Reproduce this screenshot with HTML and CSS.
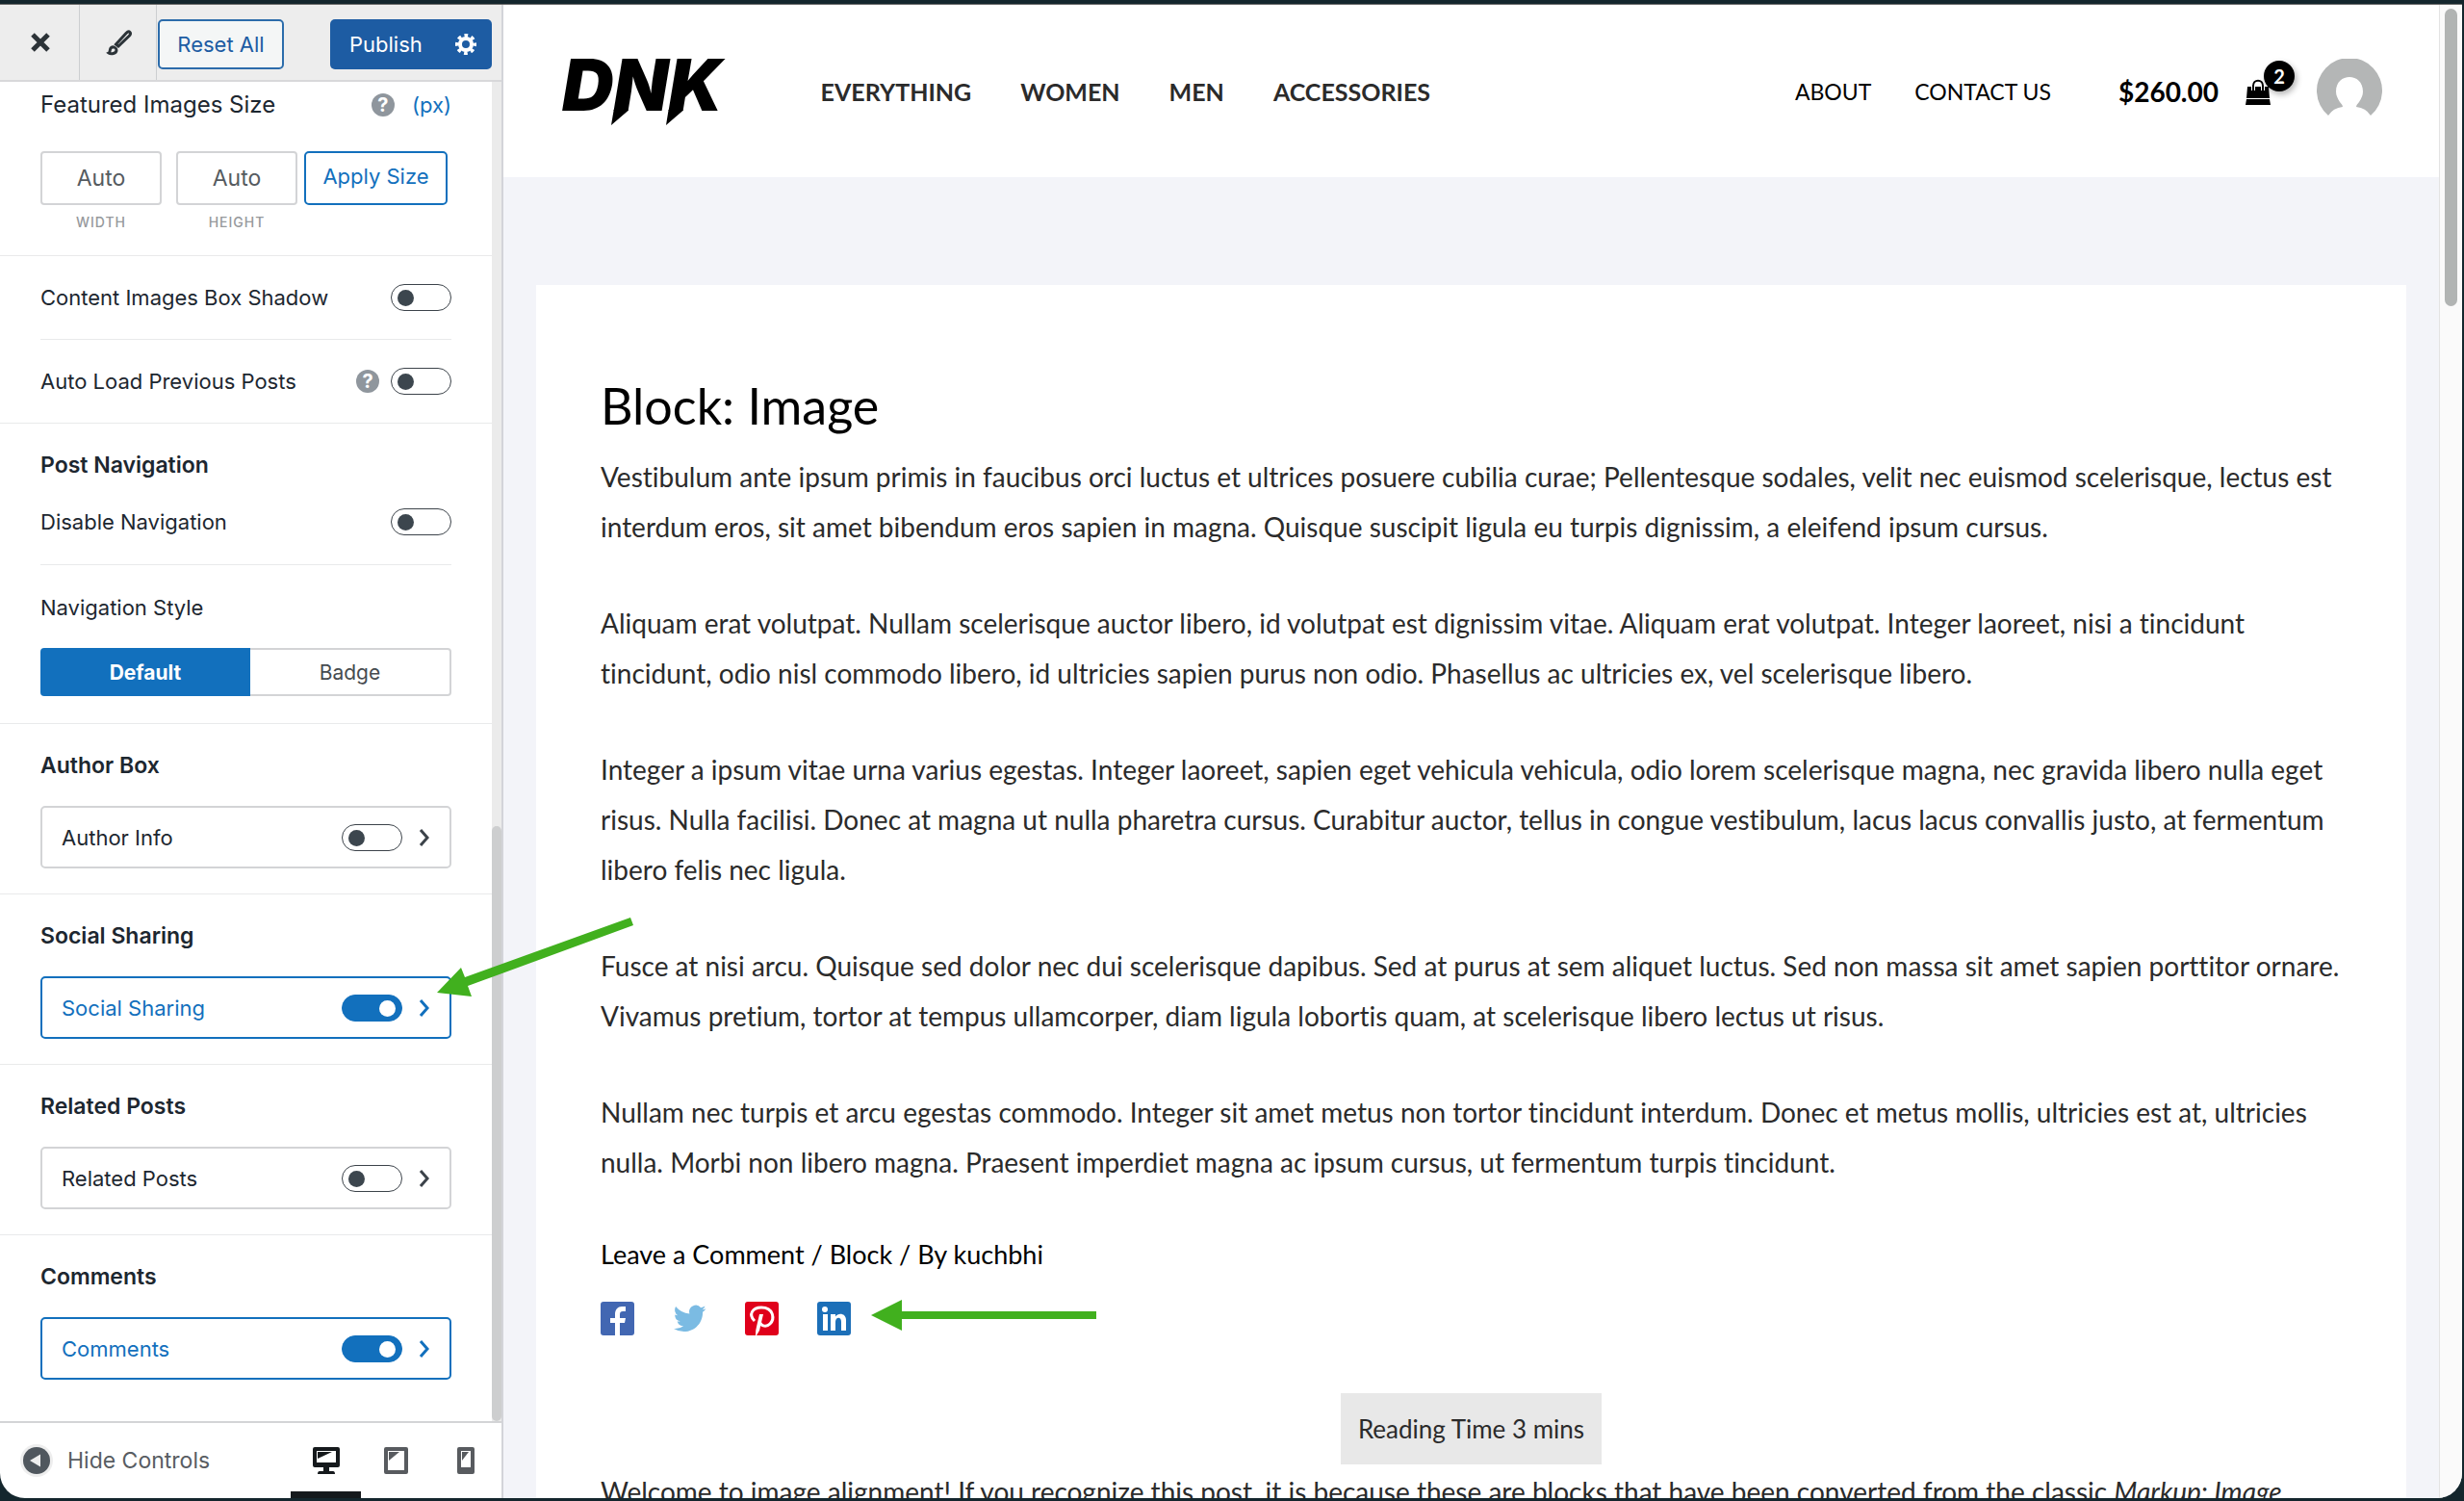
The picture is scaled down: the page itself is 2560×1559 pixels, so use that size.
FILE: index.html
```html
<!DOCTYPE html>
<html lang="en">
<head>
    <meta charset="UTF-8">
    <meta name="viewport" content="width=device-width, initial-scale=1.0">
    <title>Customize: Block: Image</title>
    <link rel="stylesheet" href="styles.css">
</head>
<body>

    <div class="window">
        <aside class="sidebar">
            <header class="sidebar-header">
                <button class="icon-button" aria-label="Close">
                    <svg width="20" height="20" viewBox="0 0 20 20"><path d="M2 2L18 18M18 2L2 18" stroke="#2c3338" stroke-width="5"/></svg>
                </button>
                <button class="icon-button" aria-label="Styles">
                    <svg width="28" height="28" viewBox="0 0 28 28" fill="none" stroke="#2c3338">
                        <path d="M10.500 16L21 4.500C22.500 3 24 2.500 25 3.500C26 4.500 25.500 6 24 7.500L13 18Z" stroke-width="3"/>
                        <path d="M3 25C5 24 3.500 21 5.500 19.500C7.500 18 11 19.500 11 22C11 26 5 26.500 3 25Z" stroke-width="3"/>
                    </svg>
                </button>
                <button class="reset">Reset All</button>
                <button class="publish">Publish
                    <svg width="22" height="22" viewBox="0 0 22 22" fill="none" stroke="#fff">
                        <circle cx="11" cy="11" r="6" stroke-width="4"/>
                        <circle cx="11" cy="11" r="9" stroke-width="4" stroke-dasharray="3.600 3.470" stroke-dashoffset="1.800"/>
                    </svg>
                </button>
            </header>

            <div class="sidebar-body">
                <div class="controls">
                    <section class="section size-section">
                        <div class="row">
                            <span class="size-title">Featured Images Size</span>
                            <span class="row-end"><span class="help">?</span><a href="#" class="unit">(px)</a></span>
                        </div>
                        <div class="size-fields">
                            <div class="field">
                                <input type="text" id="width" value="Auto">
                                <label for="width">Width</label>
                            </div>
                            <div class="field">
                                <input type="text" id="height" value="Auto">
                                <label for="height">Height</label>
                            </div>
                            <button class="apply">Apply Size</button>
                        </div>
                    </section>

                    <section class="section">
                        <div class="row toggle-row divided">
                            <label for="shadow">Content Images Box Shadow</label>
                            <input type="checkbox" class="toggle" id="shadow">
                        </div>
                        <div class="row toggle-row">
                            <label for="autoload">Auto Load Previous Posts</label>
                            <span class="row-end help-toggle"><span class="help">?</span><input type="checkbox" class="toggle" id="autoload"></span>
                        </div>
                    </section>

                    <section class="section">
                        <h3>Post Navigation</h3>
                        <div class="row nav-row divided">
                            <label for="disablenav">Disable Navigation</label>
                            <input type="checkbox" class="toggle" id="disablenav">
                        </div>
                        <fieldset class="nav-style">
                            <legend>Navigation Style</legend>
                            <div class="segments">
                                <input type="radio" name="navstyle" id="nav-default" checked>
                                <label for="nav-default">Default</label>
                                <input type="radio" name="navstyle" id="nav-badge">
                                <label for="nav-badge">Badge</label>
                            </div>
                        </fieldset>
                    </section>

                    <section class="section">
                        <h3>Author Box</h3>
                        <div class="panel">
                            <label for="author">Author Info</label>
                            <input type="checkbox" class="toggle" id="author">
                            <svg class="chevron" width="12" height="20" viewBox="0 0 12 20"><path d="M2 2L9 10L2 18"/></svg>
                        </div>
                    </section>

                    <section class="section">
                        <h3>Social Sharing</h3>
                        <div class="panel active">
                            <label for="social">Social Sharing</label>
                            <input type="checkbox" class="toggle" id="social" checked>
                            <svg class="chevron" width="12" height="20" viewBox="0 0 12 20"><path d="M2 2L9 10L2 18"/></svg>
                        </div>
                    </section>

                    <section class="section">
                        <h3>Related Posts</h3>
                        <div class="panel">
                            <label for="related">Related Posts</label>
                            <input type="checkbox" class="toggle" id="related">
                            <svg class="chevron" width="12" height="20" viewBox="0 0 12 20"><path d="M2 2L9 10L2 18"/></svg>
                        </div>
                    </section>

                    <section class="section">
                        <h3>Comments</h3>
                        <div class="panel active">
                            <label for="comments">Comments</label>
                            <input type="checkbox" class="toggle" id="comments" checked>
                            <svg class="chevron" width="12" height="20" viewBox="0 0 12 20"><path d="M2 2L9 10L2 18"/></svg>
                        </div>
                    </section>
                </div>
                <div class="sidebar-track"><div class="sidebar-thumb"></div></div>
            </div>

            <footer class="sidebar-footer">
                <button class="hide-controls">
                    <svg width="34" height="34" viewBox="0 0 34 34">
                        <circle cx="17" cy="17" r="17" fill="#eee"/>
                        <circle cx="17" cy="17" r="14" fill="#50575e"/>
                        <path d="M10 17L21 10.500V23.500Z" fill="#eee"/>
                    </svg>
                    Hide Controls
                </button>
                <div class="devices">
                    <button class="device current" aria-label="Desktop">
                        <svg width="28" height="28" viewBox="0 0 28 28" fill="currentColor">
                            <path fill-rule="evenodd" d="M2 0H26Q28 0 28 2V19Q28 21 26 21H17V25H21Q23 25 23 28H5Q5 25 7 25H11V21H2Q0 21 0 19V2Q0 0 2 0ZM4 4V16H24V4Z"/>
                            <path d="M5 5H20L5 12Z"/>
                        </svg>
                    </button>
                    <button class="device" aria-label="Tablet">
                        <svg width="25" height="28" viewBox="0 0 25 28" fill="currentColor">
                            <path fill-rule="evenodd" d="M2 0H23Q25 0 25 2V26Q25 28 23 28H2Q0 28 0 26V2Q0 0 2 0ZM4 4V24H21V4Z"/>
                            <path d="M5 5H16L5 14Z"/>
                        </svg>
                    </button>
                    <button class="device" aria-label="Mobile">
                        <svg width="18" height="28" viewBox="0 0 18 28" fill="currentColor">
                            <path fill-rule="evenodd" d="M2 0H16Q18 0 18 2V26Q18 28 16 28H2Q0 28 0 26V2Q0 0 2 0ZM4 4V21H14V4Z"/>
                            <path d="M5 5H12L5 14Z"/>
                        </svg>
                    </button>
                </div>
            </footer>
        </aside>

        <div class="preview">
            <header class="site-header">
                <a href="#" class="logo">DNK
                    <svg class="logo-tails" width="80" height="17" viewBox="0 0 80 17"><path d="M3.700 0H18.700L18.500 1L1 16ZM60.600 0H75.600L75.400 1L58 16Z"/></svg>
                </a>
                <nav class="main-nav">
                    <a href="#">EVERYTHING</a>
                    <a href="#">WOMEN</a>
                    <a href="#">MEN</a>
                    <a href="#">ACCESSORIES</a>
                </nav>
                <nav class="side-nav">
                    <a href="#">ABOUT</a>
                    <a href="#">CONTACT US</a>
                </nav>
                <a href="#" class="cart">
                    <span>$260.00</span>
                    <span class="bag">
                        <svg width="26" height="28" viewBox="0 0 26 28">
                            <path d="M2 9H24L25 21H1ZM1 22H25L26 28H0Z"/>
                            <path d="M8 13V8C8 0 18 0 18 8V13" fill="none" stroke="#fff" stroke-width="4"/>
                            <path d="M8 13V8C8 1 18 1 18 8V13" fill="none" stroke="#000" stroke-width="2"/>
                        </svg>
                        <span class="badge">2</span>
                    </span>
                </a>
                <svg class="avatar" width="68" height="68" viewBox="0 0 68 68">
                    <path fill="#b4b6b6" d="M12 59A34 34 0 1 1 56 59Q51 51 41 50Q41 48 44 45Q48 39 48 34C48 14 20 14 20 34Q20 39 24 45Q27 48 27 50Q17 51 12 59Z"/>
                </svg>
            </header>

            <main class="post">
                <h1>Block: Image</h1>
                <p>Vestibulum ante ipsum primis in faucibus orci luctus et ultrices posuere cubilia curae; Pellentesque sodales, velit nec euismod scelerisque, lectus est interdum eros, sit amet bibendum eros sapien in magna. Quisque suscipit ligula eu turpis dignissim, a eleifend ipsum cursus.</p>
                <p>Aliquam erat volutpat. Nullam scelerisque auctor libero, id volutpat est dignissim vitae. Aliquam erat volutpat. Integer laoreet, nisi a tincidunt tincidunt, odio nisl commodo libero, id ultricies sapien purus non odio. Phasellus ac ultricies ex, vel scelerisque libero.</p>
                <p>Integer a ipsum vitae urna varius egestas. Integer laoreet, sapien eget vehicula vehicula, odio lorem scelerisque magna, nec gravida libero nulla eget risus. Nulla facilisi. Donec at magna ut nulla pharetra cursus. Curabitur auctor, tellus in congue vestibulum, lacus lacus convallis justo, at fermentum libero felis nec ligula.</p>
                <p>Fusce at nisi arcu. Quisque sed dolor nec dui scelerisque dapibus. Sed at purus at sem aliquet luctus. Sed non massa sit amet sapien porttitor ornare. Vivamus pretium, tortor at tempus ullamcorper, diam ligula lobortis quam, at scelerisque libero lectus ut risus.</p>
                <p>Nullam nec turpis et arcu egestas commodo. Integer sit amet metus non tortor tincidunt interdum. Donec et metus mollis, ultricies est at, ultricies nulla. Morbi non libero magna. Praesent imperdiet magna ac ipsum cursus, ut fermentum turpis tincidunt.</p>

                <div class="meta"><a href="#">Leave a Comment</a> / <a href="#">Block</a> / By <a href="#">kuchbhi</a></div>

                <div class="share">
                    <a href="#" aria-label="Facebook">
                        <svg width="35" height="35" viewBox="0 0 35 35"><rect width="35" height="35" rx="3" fill="#4267b2"/><path fill="#fff" d="M15 35V22H10V17H15V13C15 8 18 5 22 5H26V10H23C21 10 20 11 20 13V17H26L25 22H20V35Z"/></svg>
                    </a>
                    <a href="#" aria-label="Twitter">
                        <svg width="35" height="35" viewBox="0 0 24 24"><path fill="#7bbbe3" d="M23.600 4.900a9.600 9.600 0 0 1-2.700.750 4.700 4.700 0 0 0 2.100-2.600 9.500 9.500 0 0 1-3 1.150 4.700 4.700 0 0 0-8.100 4.300A13.400 13.400 0 0 1 2.100 3.500a4.700 4.700 0 0 0 1.500 6.300 4.700 4.700 0 0 1-2.100-.6 4.700 4.700 0 0 0 3.800 4.700 4.700 4.700 0 0 1-2.100.080 4.700 4.700 0 0 0 4.400 3.300A9.500 9.500 0 0 1 .7 19.200a13.400 13.400 0 0 0 7.200 2.100c8.700 0 13.700-7.300 13.400-14a9.600 9.600 0 0 0 2.300-2.400z"/></svg>
                    </a>
                    <a href="#" aria-label="Pinterest">
                        <svg width="35" height="35" viewBox="0 0 35 35"><rect width="35" height="35" rx="3" fill="#e0001b"/><path fill="none" stroke="#fff" stroke-width="3" d="M10 20C3 13 8 6 17 6C30 6 31 18 26 23C22 27 17 25 16 22"/><path fill="#fff" d="M15 13H19L15 30L12 35H11Q11 29 12 26Z"/></svg>
                    </a>
                    <a href="#" aria-label="LinkedIn">
                        <svg width="35" height="35" viewBox="0 0 35 35"><rect width="35" height="35" rx="3" fill="#1c6fb8"/><circle cx="8" cy="8" r="3" fill="#fff"/><path fill="#fff" d="M6 13H11V30H6ZM14 13H19V15.500C22 11 30 12 30 19V30H25V21C25 15 19 16 19 21V30H14Z"/></svg>
                    </a>
                </div>

                <div class="reading-time">Reading Time 3 mins</div>
                <p>Welcome to image alignment! If you recognize this post, it is because these are blocks that have been converted from the classic <em>Markup: Image</em></p>
            </main>
        </div>

        <div class="preview-track"><div class="preview-thumb"></div></div>
    </div>

    <!-- arrows pointing at the setting and its result -->
    <svg class="arrow arrow-setting" width="206" height="86" viewBox="0 0 206 86">
        <path d="M0 78L25 52L29 62L201 0L204 8L32 71L36 82Z"/>
    </svg>
    <svg class="arrow arrow-result" width="234" height="32" viewBox="0 0 234 32">
        <path d="M0 16L32 0V12H234V20H32V32Z"/>
    </svg>

</body>
</html>
```
FILE: styles.css
```css
* {
    margin: 0;
    padding: 0;
    box-sizing: border-box;
}

body {
    height: 100vh;
    overflow: hidden;
    background: #14262d;
    padding: 4px 2px 3px 0;
    font-family: Inter, "Liberation Sans", sans-serif;
    font-size: 22px;
    line-height: 28px;
    color: #1d2730;
}

button, input {
    font: inherit;
    color: inherit;
}

button {
    cursor: pointer;
}

a {
    color: inherit;
    text-decoration: none;
}

svg {
    display: block;
    flex-shrink: 0;
}

.window {
    display: flex;
    height: 100%;
    overflow: hidden;
    background: #fff;
    border-top: 1px solid #666;
    border-radius: 0 0 26px 26px;
}

/* sidebar */

.sidebar {
    display: flex;
    flex-direction: column;
    flex: 0 0 523px;
    border-right: 2px solid #d3d4d9;
}

.sidebar-header {
    display: flex;
    align-items: center;
    height: 80px;
    padding-right: 10px;
    background: #ededed;
    border-bottom: 2px solid #d8d8da;
}

.icon-button {
    display: flex;
    align-items: center;
    justify-content: center;
    align-self: stretch;
    width: 80px;
    padding-left: 2px;
    background: none;
    border: none;
    border-right: 1px solid #ccced0;
}

.icon-button:first-child {
    width: 83px;
}

.reset, .publish, .apply {
    border-radius: 5px;
    white-space: nowrap;
}

.reset, .publish {
    height: 52px;
    margin-top: 4px;
}

.reset {
    width: 131px;
    margin-left: 1px;
    background: #f4f6f6;
    border: 2px solid #2c6cab;
    color: #1d5ca3;
}

.publish {
    display: flex;
    align-items: center;
    justify-content: space-between;
    width: 168px;
    margin-left: auto;
    padding: 0 16px 0 20px;
    background: #1d5ca3;
    border: none;
    color: #fff;
}

.sidebar-body {
    display: flex;
    flex: 1;
    min-height: 0;
}

.controls {
    flex: 1;
    overflow: hidden;
}

.section {
    padding: 29px 42px 26px;
    border-bottom: 1px solid #e9eaeb;
}

.section:last-child {
    border-bottom: none;
}

.section:nth-child(1) {
    padding-top: 10px;
}

.section:nth-child(2) {
    padding-top: 0;
    padding-bottom: 0;
}

.section:nth-child(3) {
    padding-bottom: 28px;
}

.row {
    display: flex;
    align-items: center;
    justify-content: space-between;
}

.row-end {
    display: flex;
    align-items: center;
    gap: 18px;
}

.help-toggle {
    gap: 12px;
}

.divided {
    border-bottom: 1px solid #e9eaeb;
}

.toggle-row {
    padding: 29px 0;
}

.nav-row {
    padding: 31px 0 30px;
}

.size-title {
    font-size: 24px;
}

.help {
    width: 24px;
    height: 24px;
    border-radius: 50%;
    background: #8f969d;
    color: #fff;
    font-size: 20px;
    font-weight: 700;
    line-height: 24px;
    text-align: center;
}

.unit {
    color: #1270bd;
}

.size-fields {
    display: flex;
    align-items: flex-start;
    margin-top: 34px;
}

.field {
    width: 126px;
    margin-right: 15px;
}

.field:nth-child(2) {
    margin-right: 7px;
}

.field input {
    width: 100%;
    height: 56px;
    border: 2px solid #d3d4d6;
    border-radius: 4px;
    font-size: 23px;
    color: #555b60;
    text-align: center;
}

.field label {
    display: block;
    margin-top: 10px;
    font-size: 14px;
    font-weight: 500;
    line-height: 16px;
    letter-spacing: 1px;
    text-align: center;
    text-transform: uppercase;
    color: #96999c;
}

.apply {
    width: 149px;
    height: 56px;
    background: #fff;
    border: 2px solid #1270bd;
    color: #1270bd;
    padding-bottom: 4px;
}

.toggle {
    appearance: none;
    width: 63px;
    height: 28px;
    padding: 5px 6px;
    border: 1px solid #3c434a;
    border-radius: 14px;
    background: #fff;
}

.toggle::before {
    content: "";
    display: block;
    width: 17px;
    height: 17px;
    border-radius: 50%;
    background: #3c464e;
}

.toggle:checked {
    background: #1270bd;
    border-color: #1270bd;
}

.toggle:checked::before {
    margin-left: auto;
    background: #fff;
}

h3 {
    font-size: 23px;
    font-weight: 600;
    line-height: 28px;
}

.nav-style {
    border: none;
    margin-top: 30px;
}

.segments {
    display: flex;
    height: 50px;
    margin-top: 28px;
    font-size: 21px;
}

.segments input {
    appearance: none;
}

.segments label {
    display: flex;
    align-items: center;
    justify-content: center;
    flex: 208;
    padding-top: 2px;
    border: 2px solid #d3d4d6;
    border-left: none;
    border-radius: 0 4px 4px 0;
    color: #464b50;
}

.segments input:first-child + label {
    flex: 219;
    border: none;
    border-radius: 4px 0 0 4px;
}

.segments input:checked + label {
    background: #1270bd;
    color: #fff;
    font-weight: 700;
}

.panel {
    display: flex;
    align-items: center;
    height: 65px;
    margin-top: 28px;
    padding: 0 20px;
    border: 2px solid #d3d4d6;
    border-radius: 5px;
}

.panel label {
    flex: 1;
}

.panel.active {
    border-color: #1270bd;
    color: #1270bd;
}

.chevron {
    margin-left: 17px;
    fill: none;
    stroke: #3c434a;
    stroke-width: 3;
}

.active .chevron {
    stroke: #1270bd;
}

.sidebar-track {
    width: 10px;
    background: #ebebeb;
    display: flex;
    align-items: flex-end;
}

.sidebar-thumb {
    width: 10px;
    height: calc(100% * 4 / 9);
    border-radius: 5px;
    background: #cdcecf;
}

.sidebar-footer {
    display: flex;
    justify-content: space-between;
    height: 80px;
    padding: 0 8px 0 21px;
    border-top: 2px solid #d3d4d6;
}

.hide-controls {
    display: flex;
    align-items: center;
    gap: 15px;
    background: none;
    border: none;
    font-size: 23px;
    color: #585d62;
}

.devices {
    display: flex;
}

.device {
    display: flex;
    align-items: center;
    justify-content: center;
    width: 73px;
    background: none;
    border: none;
    color: #585b5f;
}

.device:last-child {
    width: 65px;
    padding-left: 6px;
}

.device.current {
    padding-top: 7px;
    border-bottom: 7px solid #15191c;
    color: #15191c;
}

/* site preview */

.preview {
    flex: 1;
    overflow: hidden;
    background: #f3f4f9;
    font-family: Lato, sans-serif;
    font-variant-ligatures: none;
}

.site-header {
    display: flex;
    align-items: center;
    height: 179px;
    padding: 1px 59px 0 61px;
    background: #fff;
    color: #000;
}

.logo {
    position: relative;
    margin-bottom: 14px;
    font-family: Inter, sans-serif;
    font-size: 74px;
    font-weight: 900;
    font-style: italic;
    line-height: 80px;
}

.logo-tails {
    position: absolute;
    left: 50px;
    top: 66px;
}

.main-nav {
    display: flex;
    gap: 51px;
    margin-left: 102px;
    font-size: 25px;
    font-weight: 700;
    color: #2b2b2b;
}

.side-nav {
    display: flex;
    gap: 45px;
    margin-left: auto;
    font-size: 23px;
}

.cart {
    display: flex;
    align-items: center;
    gap: 28px;
    margin-left: 70px;
    font-size: 28px;
    font-weight: 700;
}

.bag {
    position: relative;
}

.badge {
    position: absolute;
    left: 19px;
    top: -18px;
    width: 32px;
    height: 32px;
    border-radius: 50%;
    background: #000;
    box-shadow: 2px 3px 6px rgba(0, 0, 0, 0.3);
    color: #fff;
    font-size: 20px;
    line-height: 32px;
    text-align: center;
}

.avatar {
    margin-left: 48px;
}

.post {
    margin: 112px 34px 0;
    padding: 90px 67px;
    background: #fff;
    color: #2b2b2b;
    font-size: 28px;
    line-height: 52px;
}

.post h1 {
    margin-bottom: 13px;
    font-size: 52px;
    font-weight: 400;
    line-height: 70px;
    color: #000;
}

.post p {
    margin-bottom: 48px;
}

.meta {
    margin-top: -4px;
    font-size: 27px;
    color: #000;
}

.share {
    display: flex;
    gap: 40px;
    margin-top: 23px;
}

.reading-time {
    width: fit-content;
    margin: 60px auto 2px;
    padding: 11px 18px;
    background: #e8e8e8;
    font-size: 26px;
}

.preview-track {
    width: 24px;
    padding: 4px 5px;
    border-left: 1px solid #e3e3e3;
    background: #fafafa;
}

.preview-thumb {
    width: 13px;
    height: 20%;
    border-radius: 7px;
    background: #b1b4b3;
}

.arrow {
    position: absolute;
    fill: #41b01e;
}

.arrow-setting {
    left: 454px;
    top: 953px;
}

.arrow-result {
    left: 905px;
    top: 1350px;
}
```
